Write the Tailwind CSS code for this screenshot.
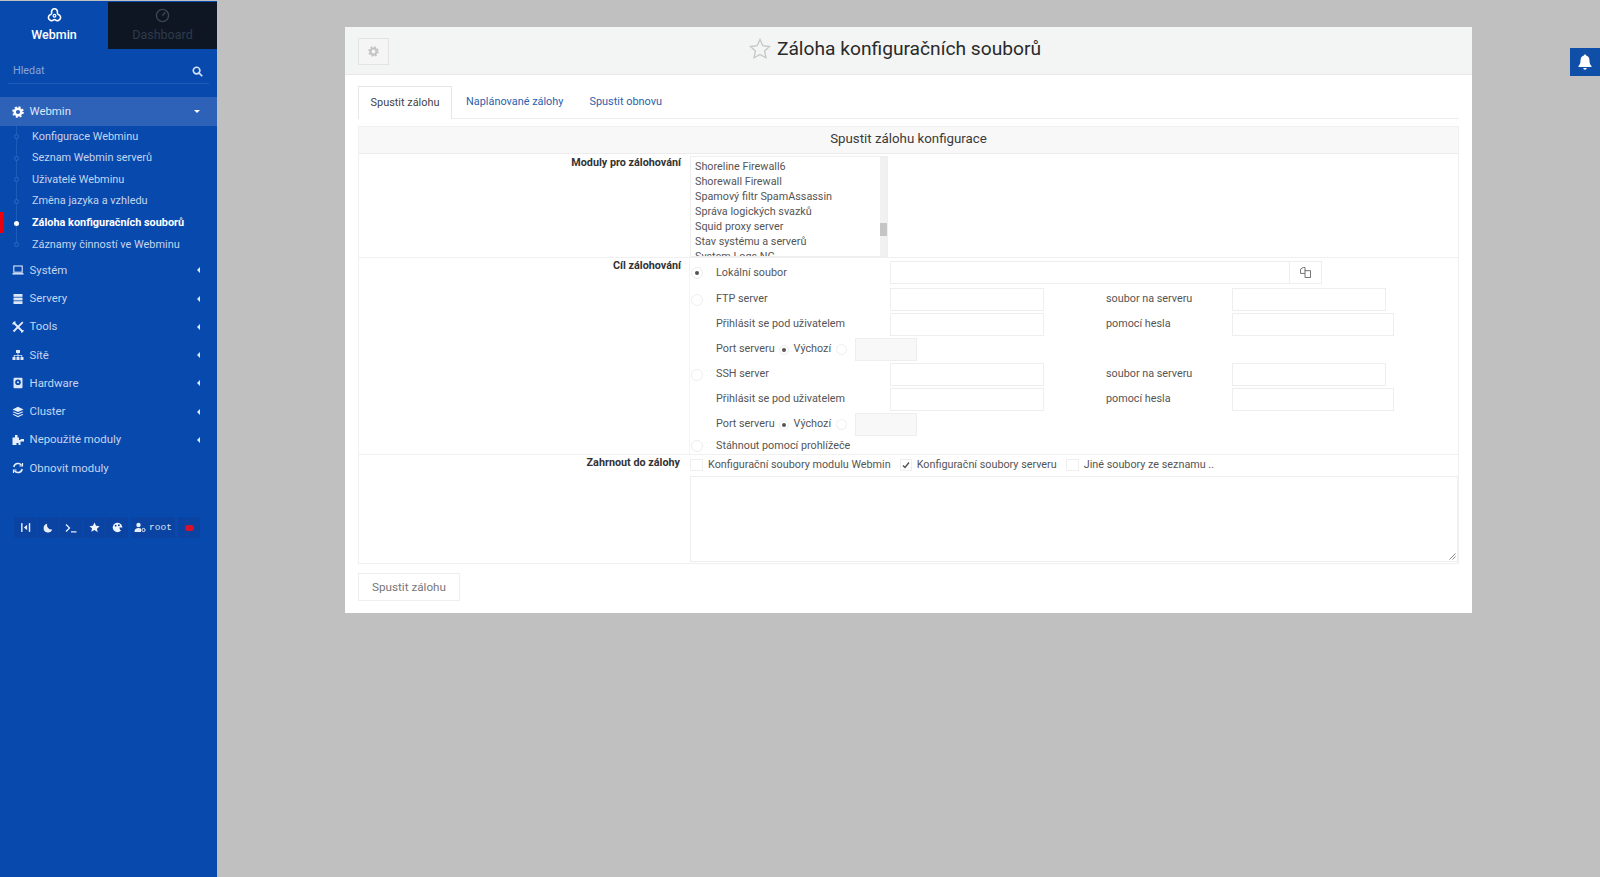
<!DOCTYPE html>
<html lang="cs">
<head>
<meta charset="utf-8">
<script src="https://cdn.jsdelivr.net/npm/@tailwindcss/browser@4"></script>
<title>Webmin</title>
</head>
<body class="h-[877px] w-[1600px] overflow-hidden bg-[#c0c0c0] font-['Roboto',sans-serif] text-[11px] text-[#333]">
<div class="flex h-[877px] border-t border-[#c0c0c0]">
  <!-- Sidebar -->
  <aside class="w-[217px] shrink-0 bg-[#0849ad] pt-[1px] text-[#c4d5f0]">
    <div class="flex h-[47px]">
      <div class="flex w-[108px] flex-col items-center pt-[5px] text-white">
        <svg class="h-[17px] w-[17px]" viewBox="0 0 16 16" fill="none" stroke="#fff" stroke-width="1.500"><path d="M5.300 5.200A2.800 2.800 0 1 1 10.700 5.200C10.500 6 10.800 6.600 11.500 7A3 3 0 1 1 8.800 12.200C8.300 11.800 7.700 11.800 7.200 12.200A3 3 0 1 1 4.500 7C5.200 6.600 5.500 6 5.300 5.200Z"/><circle cx="8" cy="8.200" r="1.300" stroke-width="1.100"/></svg>
        <span class="mt-[2px] text-[12.500px] font-medium leading-[18px]">Webmin</span>
      </div>
      <div class="flex w-[109px] flex-col items-center bg-[#0e1624] pt-[6px] text-[#2f3a4a]">
        <svg class="h-[15px] w-[15px]" viewBox="0 0 16 16" fill="none" stroke="#3a4656" stroke-width="1.500"><circle cx="8" cy="8" r="6.500"/><path d="M8 8l3-3.500"/></svg>
        <span class="mt-[3px] text-[12.500px] leading-[18px]">Dashboard</span>
      </div>
    </div>
    <div class="mx-[8px] mt-[9px] flex h-[26px] items-center justify-between border-b border-[#1d5cb8] pl-[5px] pr-[6px] pt-[1px] text-[10.800px] text-[#86a5d8]">
      <span>Hledat</span>
      <svg class="h-[11px] w-[11px]" viewBox="0 0 12 12" fill="none" stroke="#d5e1f5" stroke-width="1.800"><circle cx="5" cy="5" r="3.600"/><path d="M7.800 7.800l3.400 3.400"/></svg>
    </div>
    <div class="mt-[13px] flex h-[29px] items-center bg-[#2e62b8] pl-[12px] pr-[17px] text-[11.400px] text-[#dbe6f7]">
      <svg class="mr-[5.500px] h-[12px] w-[12px]" viewBox="0 0 12 12"><circle cx="6" cy="6" r="3.300" fill="none" stroke="#fff" stroke-width="2.400"/><circle cx="6" cy="6" r="4.900" fill="none" stroke="#fff" stroke-width="1.800" stroke-dasharray="2 1.850"/></svg>
      <span class="flex-1">Webmin</span>
      <span class="border-x-[3px] border-t-[3px] border-x-transparent border-t-white"></span>
    </div>
    <ul class="relative text-[10.900px]">
      <span class="absolute bottom-[10px] left-[16px] top-0 w-px bg-[#1c5cb8]"></span>
      <li class="relative flex h-[21.600px] items-center pl-[14px]"><span class="mr-[13px] h-[5px] w-[5px] rounded-full border border-[#2a6bc8] bg-[#0849ad]"></span>Konfigurace Webminu</li>
      <li class="relative flex h-[21.600px] items-center pl-[14px]"><span class="mr-[13px] h-[5px] w-[5px] rounded-full border border-[#2a6bc8] bg-[#0849ad]"></span>Seznam Webmin serverů</li>
      <li class="relative flex h-[21.600px] items-center pl-[14px]"><span class="mr-[13px] h-[5px] w-[5px] rounded-full border border-[#2a6bc8] bg-[#0849ad]"></span>Uživatelé Webminu</li>
      <li class="relative flex h-[21.600px] items-center pl-[14px]"><span class="mr-[13px] h-[5px] w-[5px] rounded-full border border-[#2a6bc8] bg-[#0849ad]"></span>Změna jazyka a vzhledu</li>
      <li class="relative flex h-[21.600px] items-center pl-[14px] font-bold text-white"><span class="absolute left-0 top-0 h-[21px] w-[4px] bg-[#e8000d]"></span><span class="mr-[13px] h-[5px] w-[5px] rounded-full bg-white"></span>Záloha konfiguračních souborů</li>
      <li class="relative flex h-[21.600px] items-center pl-[14px]"><span class="mr-[13px] h-[5px] w-[5px] rounded-full border border-[#2a6bc8] bg-[#0849ad]"></span>Záznamy činností ve Webminu</li>
    </ul>
    <ul class="mt-[0.500px] text-[11.400px]">
      <li class="flex h-[28.300px] items-center pl-[12px] pr-[17px]"><svg class="mr-[5.500px] h-[12px] w-[12px]" viewBox="0 0 12 12" fill="none" stroke="#dbe6f7" stroke-width="1.100"><rect x="1.800" y="2" width="8.400" height="6.200"/><path d="M.5 9.800h11" stroke-width="1.500"/></svg><span class="flex-1">Systém</span><span class="border-y-[3px] border-r-[3px] border-y-transparent border-r-[#dbe6f7]"></span></li>
      <li class="flex h-[28.300px] items-center pl-[12px] pr-[17px]"><svg class="mr-[5.500px] h-[12px] w-[12px]" viewBox="0 0 12 12" fill="#dbe6f7"><rect x="1.500" y="1" width="9" height="2.800"/><rect x="1.500" y="4.600" width="9" height="2.800"/><rect x="1.500" y="8.200" width="9" height="2.800"/></svg><span class="flex-1">Servery</span><span class="border-y-[3px] border-r-[3px] border-y-transparent border-r-[#dbe6f7]"></span></li>
      <li class="flex h-[28.300px] items-center pl-[12px] pr-[17px]"><svg class="mr-[5.500px] h-[12px] w-[12px]" viewBox="0 0 12 12" fill="none" stroke="#e6eefb"><path d="M1.500 1.500l9 9" stroke-width="1.800"/><path d="M10.800 1.200L1.500 10.500" stroke-width="1.800"/><path d="M1 3.500A2.500 2.500 0 0 1 3.500 1" stroke-width="1.400"/><path d="M9 11a2 2 0 0 0 2-2" stroke-width="1.400"/></svg><span class="flex-1">Tools</span><span class="border-y-[3px] border-r-[3px] border-y-transparent border-r-[#dbe6f7]"></span></li>
      <li class="flex h-[28.300px] items-center pl-[12px] pr-[17px]"><svg class="mr-[5.500px] h-[12px] w-[12px]" viewBox="0 0 12 12" fill="#dbe6f7"><rect x="4" y="1" width="4" height="3"/><rect x=".5" y="8" width="3" height="3"/><rect x="4.500" y="8" width="3" height="3"/><rect x="8.500" y="8" width="3" height="3"/><path d="M5.600 4h.8v2h3.800v2h-.8V6.800H6.400V8h-.8V6.800H2.600V8h-.8V6h3.800z"/></svg><span class="flex-1">Sítě</span><span class="border-y-[3px] border-r-[3px] border-y-transparent border-r-[#dbe6f7]"></span></li>
      <li class="flex h-[28.300px] items-center pl-[12px] pr-[17px]"><svg class="mr-[5.500px] h-[12px] w-[12px]" viewBox="0 0 12 12"><rect x="1.500" y=".8" width="9" height="10.400" rx="1" fill="#dbe6f7"/><circle cx="6" cy="5.300" r="2.800" fill="#0849ad"/><circle cx="6" cy="5.300" r="1" fill="#dbe6f7"/></svg><span class="flex-1">Hardware</span><span class="border-y-[3px] border-r-[3px] border-y-transparent border-r-[#dbe6f7]"></span></li>
      <li class="flex h-[28.300px] items-center pl-[12px] pr-[17px]"><svg class="mr-[5.500px] h-[12px] w-[12px]" viewBox="0 0 12 12" fill="#e6eefb"><path d="M6 .8l5.500 2.600L6 6 .5 3.400z"/><path d="M1.800 5.400L6 7.300l4.200-1.900 1.300.6L6 8.600.5 6z"/><path d="M1.800 8L6 9.900 10.200 8l1.300.6L6 11.200.5 8.600z"/></svg><span class="flex-1">Cluster</span><span class="border-y-[3px] border-r-[3px] border-y-transparent border-r-[#dbe6f7]"></span></li>
      <li class="flex h-[28.300px] items-center pl-[12px] pr-[17px]"><svg class="mr-[5.500px] h-[12px] w-[12px]" viewBox="0 0 12 12" fill="#e6eefb"><path d="M3 1h2.500v2.500H7V6h1.500V5H12v2.500H8.500V11H6.500V9h-2v2H.5V3.500H3z"/></svg><span class="flex-1">Nepoužité moduly</span><span class="border-y-[3px] border-r-[3px] border-y-transparent border-r-[#dbe6f7]"></span></li>
      <li class="flex h-[28.300px] items-center pl-[12px] pr-[17px]"><svg class="mr-[5.500px] h-[12px] w-[12px]" viewBox="0 0 12 12" fill="none" stroke="#e6eefb" stroke-width="1.500"><path d="M1.800 5A4.300 4.300 0 0 1 9.500 3.200M10.200 7A4.300 4.300 0 0 1 2.500 8.800"/><path d="M10.500 1v3H7.500M1.500 11V8h3" stroke-width="1.200"/></svg><span class="flex-1">Obnovit moduly</span></li>
    </ul>
    <div class="ml-[14px] mt-[35px] flex h-[21px] w-[187px] items-center gap-[1px] text-[#dbe6f7]">
      <span class="flex h-full w-[22px] items-center justify-center bg-[#0a43a2]"><svg class="h-[11px] w-[11px]" viewBox="0 0 10 10" fill="#e6eefb"><rect x="1" y="1" width="1.300" height="8"/><rect x="8" y="1" width="1.300" height="8"/><path d="M6.500 2.500v5L3.500 5z"/></svg></span>
      <span class="flex h-full w-[22px] items-center justify-center bg-[#0a43a2]"><svg class="h-[10px] w-[10px]" viewBox="0 0 10 10" fill="#e6eefb"><path d="M4.200.8a4.400 4.400 0 1 0 5 5.700A4.500 4.500 0 0 1 4.200.8z"/></svg></span>
      <span class="flex h-full w-[22px] items-center justify-center bg-[#0a43a2]"><svg class="h-[10px] w-[12px]" viewBox="0 0 12 10" fill="none" stroke="#e6eefb" stroke-width="1.300"><path d="M1 1.500L4.500 5 1 8.500M6 8.800h5.500"/></svg></span>
      <span class="flex h-full w-[22px] items-center justify-center bg-[#0a43a2]"><svg class="h-[11px] w-[11px]" viewBox="0 0 12 12" fill="#f0f5fd"><path d="M6 .5l1.700 3.600 3.900.5-2.900 2.700.8 3.900L6 8.800l-3.500 1.900.8-3.900L.4 4.600l3.900-.5z"/></svg></span>
      <span class="flex h-full w-[22px] items-center justify-center bg-[#0a43a2]"><svg class="h-[11px] w-[11px]" viewBox="0 0 12 12"><circle cx="6" cy="6" r="5.200" fill="#f0f5fd"/><circle cx="4" cy="4" r="1" fill="#0a43a2"/><circle cx="7.500" cy="3.500" r="1" fill="#0a43a2"/><path d="M8 6h3.500L11 9H9z" fill="#0a43a2"/></svg></span>
      <span class="ml-[2px] flex h-full w-[44px] items-center justify-center gap-[3px] bg-[#0a43a2] font-['Liberation_Mono',monospace] text-[9.500px]"><svg class="h-[11px] w-[12px]" viewBox="0 0 12 10" fill="#e6eefb"><circle cx="4.500" cy="2.500" r="2.200"/><path d="M.5 9.500c0-3 1.500-4 4-4 1 0 1.800.2 2.500.6V9.500z"/><circle cx="9.500" cy="7.500" r="1.600" fill="none" stroke="#e6eefb"/></svg>root</span>
      <span class="ml-[2px] flex h-full w-[22px] items-center justify-center bg-[#0a43a2]"><span class="h-[6px] w-[9px] rounded-full bg-[#d8102c]"></span></span>
    </div>
  </aside>

  <!-- Main -->
  <main class="relative flex-1">
    <section class="ml-[128px] mt-[26px] h-[586px] w-[1127px] bg-white">
      <header class="relative flex h-[48px] items-center justify-center border-b border-[#e8e8e8] bg-[#f3f4f4] pb-[3px]">
        <span class="absolute left-[13px] top-[11px] flex h-[27px] w-[31px] items-center justify-center border border-[#e3e3e3] bg-[#f5f5f5]"><svg class="h-[11px] w-[11px]" viewBox="0 0 12 12"><circle cx="6" cy="6" r="3.300" fill="none" stroke="#c4c4c4" stroke-width="2.400"/><circle cx="6" cy="6" r="4.900" fill="none" stroke="#c4c4c4" stroke-width="1.800" stroke-dasharray="2 1.850"/></svg></span>
        <h1 class="relative pl-[1px] text-[19.200px] leading-[28px] text-[#2a2a2a]"><svg class="absolute left-[-27px] top-[3px] h-[22px] w-[22px]" viewBox="0 0 22 22" fill="none" stroke="#c6c6c6" stroke-width="1.300"><path d="M11 1.500l2.900 6.200 6.700.8-5 4.600 1.400 6.700L11 16.500l-6 3.300 1.400-6.700-5-4.600 6.700-.8z"/></svg>Záloha konfiguračních souborů</h1>
      </header>
      <div class="px-[13px]">
        <nav class="mt-[11px] flex h-[33px] border-b border-[#eee] text-[10.900px] text-[#2b62ae]">
          <span class="flex h-[33px] w-[94px] items-center justify-center border border-b-0 border-[#e6e6e6] bg-white pt-[1px] text-[#444]">Spustit zálohu</span>
          <span class="ml-[1px] flex items-center px-[13px] pt-[1px]">Naplánované zálohy</span>
          <span class="flex items-center px-[13px] pt-[1px]">Spustit obnovu</span>
        </nav>
        <div class="mt-[7px] h-[438px] w-[1101px] border border-[#f0f0f0]">
          <div class="flex h-[27px] items-center justify-center border-b border-[#ececec] bg-[#f8f8f8] pb-[2px] text-[13.300px] text-[#3a3a3a]">Spustit zálohu konfigurace</div>
          <!-- row 1 -->
          <div class="flex h-[104px] border-b border-[#f0f0f0]">
            <div class="w-[322px] pt-[1px] text-right text-[10.800px] font-bold leading-[15px] text-[#333]">Moduly pro zálohování</div>
            <div class="ml-[9px] mt-[2px] flex h-[101px] w-[198px] overflow-hidden border border-[#efefef]">
              <div class="flex-1 overflow-hidden pl-[4px] pt-[2px] text-[10.800px] leading-[15px] text-[#555]">
                <div>Shoreline Firewall6</div><div>Shorewall Firewall</div><div>Spamový filtr SpamAssassin</div><div>Správa logických svazků</div><div>Squid proxy server</div><div>Stav systému a serverů</div><div>System Logs NG</div>
              </div>
              <div class="w-[7px] bg-[#f1f1f1] pt-[66px]"><div class="h-[13px] bg-[#c5c5c5]"></div></div>
            </div>
          </div>
          <!-- row 2 -->
          <div class="flex h-[197px] border-b border-[#f0f0f0]">
            <div class="w-[322px] text-right text-[10.800px] font-bold leading-[15px] text-[#333]">Cíl zálohování</div>
            <div class="ml-[8px] flex-1 border-l border-[#f4f4f4] pt-[3px] text-[10.800px] text-[#555]">
              <div class="flex h-[26px] items-start">
                <span class="ml-[1px] mr-[13px] mt-[6px] flex h-[12px] w-[12px] items-center justify-center rounded-full border border-[#eee]"><span class="h-[4px] w-[4px] rounded-full bg-[#555]"></span></span>
                <span class="mt-[4px] w-[174px]">Lokální soubor</span>
                <span class="h-[23px] w-[400px] border border-[#eee]"></span>
                <span class="flex h-[23px] w-[32px] items-center justify-center border border-l-0 border-[#eee]"><svg class="h-[11px] w-[11px]" viewBox="0 0 12 12" fill="none" stroke="#666"><path d="M.5 2.500l3-2h2v6.500h-5zM5 4h6.500v7.500H5.500V7"/></svg></span>
              </div>
              <div class="flex h-[25px] items-center">
                <span class="ml-[1px] mr-[13px] h-[12px] w-[12px] rounded-full border border-[#eee]"></span>
                <span class="w-[174px]">FTP server</span>
                <span class="h-[23px] w-[154px] border border-[#eee]"></span>
                <span class="ml-[62px] w-[126px]">soubor na serveru</span>
                <span class="h-[23px] w-[154px] border border-[#eee]"></span>
              </div>
              <div class="flex h-[25px] items-center">
                <span class="ml-[26px] w-[174px]">Přihlásit se pod uživatelem</span>
                <span class="h-[23px] w-[154px] border border-[#eee]"></span>
                <span class="ml-[62px] w-[126px]">pomocí hesla</span>
                <span class="h-[23px] w-[162px] border border-[#eee]"></span>
              </div>
              <div class="flex h-[25px] items-center">
                <span class="ml-[26px]">Port serveru</span>
                <span class="ml-[4px] mr-[5px] flex h-[10px] w-[10px] items-center justify-center rounded-full border border-[#eee]"><span class="h-[4px] w-[4px] rounded-full bg-[#555]"></span></span>
                <span>Výchozí</span>
                <span class="ml-[5px] h-[11px] w-[11px] rounded-full border border-[#eee]"></span>
                <span class="ml-[8px] h-[23px] w-[62px] border border-[#eee] bg-[#f8f8f8]"></span>
              </div>
              <div class="flex h-[25px] items-center">
                <span class="ml-[1px] mr-[13px] h-[12px] w-[12px] rounded-full border border-[#eee]"></span>
                <span class="w-[174px]">SSH server</span>
                <span class="h-[23px] w-[154px] border border-[#eee]"></span>
                <span class="ml-[62px] w-[126px]">soubor na serveru</span>
                <span class="h-[23px] w-[154px] border border-[#eee]"></span>
              </div>
              <div class="flex h-[25px] items-center">
                <span class="ml-[26px] w-[174px]">Přihlásit se pod uživatelem</span>
                <span class="h-[23px] w-[154px] border border-[#eee]"></span>
                <span class="ml-[62px] w-[126px]">pomocí hesla</span>
                <span class="h-[23px] w-[162px] border border-[#eee]"></span>
              </div>
              <div class="flex h-[25px] items-center">
                <span class="ml-[26px]">Port serveru</span>
                <span class="ml-[4px] mr-[5px] flex h-[10px] w-[10px] items-center justify-center rounded-full border border-[#eee]"><span class="h-[4px] w-[4px] rounded-full bg-[#555]"></span></span>
                <span>Výchozí</span>
                <span class="ml-[5px] h-[11px] w-[11px] rounded-full border border-[#eee]"></span>
                <span class="ml-[8px] h-[23px] w-[62px] border border-[#eee] bg-[#f8f8f8]"></span>
              </div>
              <div class="flex h-[18px] items-center">
                <span class="ml-[1px] mr-[13px] h-[12px] w-[12px] rounded-full border border-[#eee]"></span>
                <span>Stáhnout pomocí prohlížeče</span>
              </div>
            </div>
          </div>
          <!-- row 3 -->
          <div class="flex h-[109px]">
            <div class="w-[322px] text-right text-[10.800px] font-bold leading-[15px] text-[#333]">Zahrnout do zálohy</div>
            <div class="ml-[10px] flex-1 text-[10.800px] text-[#555]">
              <div class="mb-[2px] flex h-[19px] items-center pt-[1px]">
                <span class="h-[12px] w-[13px] border border-[#eee]"></span>
                <span class="ml-[5px] mr-[9px]">Konfigurační soubory modulu Webmin</span>
                <span class="flex h-[12px] w-[12px] items-center justify-center border border-[#eee]"><svg class="h-[8px] w-[8px]" viewBox="0 0 8 8" fill="none" stroke="#555" stroke-width="1.500"><path d="M1 4.500l2 2L7 1.500"/></svg></span>
                <span class="ml-[5px] mr-[9px]">Konfigurační soubory serveru</span>
                <span class="h-[12px] w-[13px] border border-[#eee]"></span>
                <span class="ml-[5px]">Jiné soubory ze seznamu ..</span>
              </div>
              <div class="relative h-[86px] w-[768px] border border-[#eee]">
                <svg class="absolute bottom-[1px] right-[1px] h-[7px] w-[7px]" viewBox="0 0 7 7" stroke="#888"><path d="M6.500.5L.5 6.500M6.500 3.500l-3 3"/></svg>
              </div>
            </div>
          </div>
        </div>
        <button class="mt-[9px] flex h-[28px] w-[102px] items-center justify-center border border-[#eee] bg-white pt-[1px] text-[11.700px] text-[#777]">Spustit zálohu</button>
      </div>
    </section>
    <div class="absolute right-0 top-[47px] flex h-[28px] w-[30px] items-center justify-center bg-[#0f4fa8]">
      <svg class="h-[16px] w-[14px]" viewBox="0 0 14 16" fill="#fff"><path d="M7 .5c.7 0 1.100.5 1.100 1.100C10.500 2.100 11.500 4 11.500 6.500c0 3 .8 4.200 2 5.500v1H.5v-1c1.200-1.300 2-2.500 2-5.500C2.500 4 3.500 2.100 5.900 1.600 5.900 1 6.300.5 7 .5zM5.300 14h3.400c0 1-.8 1.700-1.700 1.700S5.300 15 5.300 14z"/></svg>
    </div>
  </main>
</div>
</body>
</html>
